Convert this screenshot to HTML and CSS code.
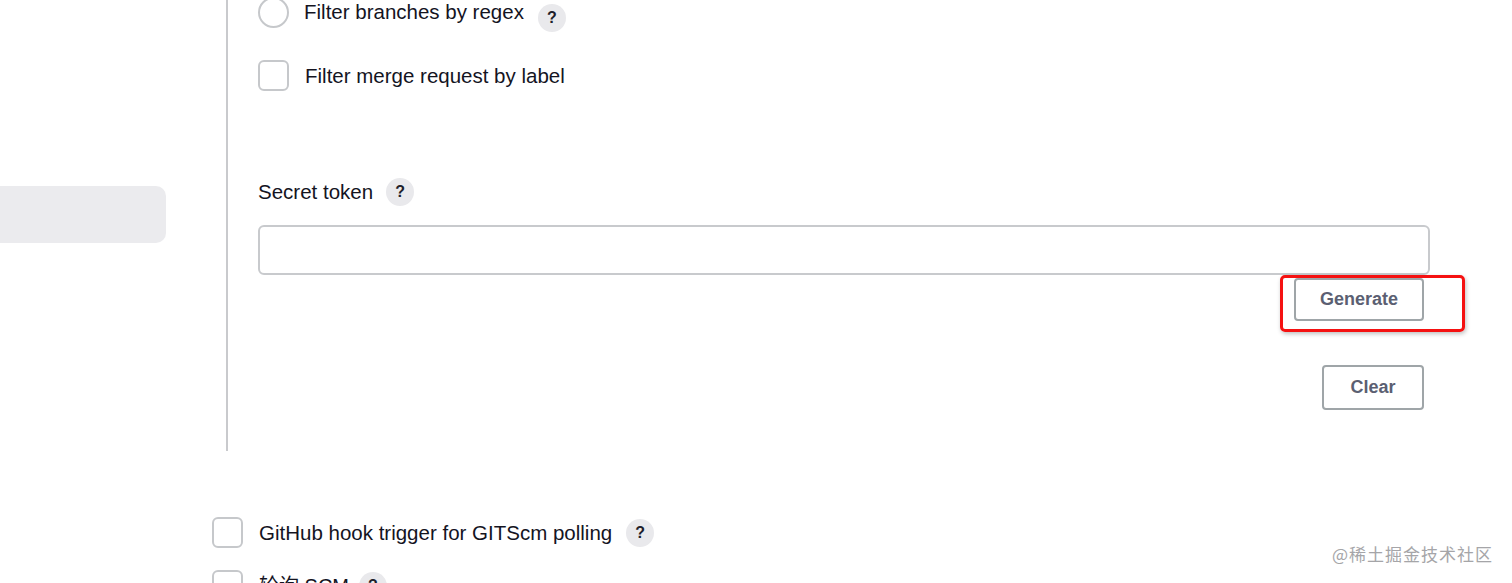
FILE: index.html
```html
<!DOCTYPE html>
<html lang="zh">
<head>
<meta charset="utf-8">
<title>Build Triggers</title>
<link rel="stylesheet" href="styles.css">
</head>
<body>
<div class="page">
  <aside class="sidebar">
    <div class="side-item"></div>
  </aside>
  <main class="main">
    <section class="nested">
      <div class="opt opt-first">
        <span class="radio"></span>
        <span class="label">Filter branches by regex</span>
        <span class="help help-low">?</span>
      </div>
      <div class="opt opt-second">
        <span class="checkbox"></span>
        <span class="label">Filter merge request by label</span>
      </div>
      <div class="field-title">
        <span class="label">Secret token</span>
        <span class="help">?</span>
      </div>
      <input class="text-input" type="text">
      <div class="btn-row">
        <div class="annot">
          <button class="btn btn-generate">Generate</button>
          <span class="red-box"></span>
        </div>
      </div>
      <div class="btn-row btn-row-clear">
        <button class="btn btn-clear">Clear</button>
      </div>
    </section>
    <div class="opt opt-outer">
      <span class="checkbox"></span>
      <span class="label">GitHub hook trigger for GITScm polling</span>
      <span class="help">?</span>
    </div>
    <div class="opt opt-outer2">
      <span class="checkbox"></span>
      <span class="label label-cjk">轮询 SCM</span>
      <span class="help help-tight">?</span>
    </div>
  </main>
</div>
<div class="watermark">@稀土掘金技术社区</div>
</body>
</html>
```
FILE: styles.css
```css
html, body {
  margin: 0;
  padding: 0;
  background: #ffffff;
  overflow: hidden;
  height: 583px;
}
body {
  font-family: "Liberation Sans", "Noto Sans CJK SC", Arial, sans-serif;
  color: #14141f;
}
.page {
  display: grid;
  grid-template-columns: 212px 1fr;
}
.sidebar {
  padding-top: 186px;
}
.side-item {
  width: 166px;
  height: 57px;
  background: #ebebee;
  border-radius: 0 10px 10px 0;
}
.main {
  padding-right: 82px;
}
.nested {
  margin-left: 14px;
  margin-top: -3px;
  border-left: 2px solid #c9cacd;
  padding-left: 30px;
  padding-bottom: 41px;
  display: flex;
  flex-direction: column;
}
.opt {
  display: flex;
  align-items: center;
  height: 31px;
}
.label {
  font-size: 20.5px;
  line-height: 28px;
  white-space: nowrap;
}
.label-cjk {
  font-size: 20px;
}
.radio {
  width: 27px;
  height: 27px;
  border: 2px solid #c6c8cb;
  border-radius: 50%;
  margin-right: 15px;
  flex: none;
}
.checkbox {
  width: 27px;
  height: 27px;
  border: 2px solid #c6c8cb;
  border-radius: 6px;
  margin-right: 16px;
  flex: none;
}
.opt-first .label {
  margin-top: -2px;
}
.help {
  width: 28px;
  height: 28px;
  border-radius: 50%;
  background: #e9e9ec;
  color: #20202a;
  font-size: 16px;
  font-weight: bold;
  display: inline-flex;
  align-items: center;
  justify-content: center;
  margin-left: 14px;
  flex: none;
}
.help-low {
  margin-top: 10px;
}
.help-tight {
  margin-left: 10px;
}
.opt-second {
  margin-top: 32px;
}
.field-title {
  display: flex;
  align-items: center;
  margin-top: 87px;
  height: 28px;
}
.field-title .help {
  margin-left: 13px;
}
.text-input {
  margin-top: 19px;
  height: 50px;
  box-sizing: border-box;
  border: 2px solid #c8cacd;
  border-radius: 6px;
  background: #fff;
  outline: none;
}
.btn-row {
  display: flex;
  justify-content: flex-end;
  padding-right: 6px;
  margin-top: 3px;
}
.btn-row-clear {
  margin-top: 44px;
}
.annot {
  position: relative;
  display: flex;
}
.btn {
  font-family: "Liberation Sans", Arial, sans-serif;
  font-weight: bold;
  font-size: 18px;
  color: #5b5f72;
  background: #fff;
  border: 2px solid #9fa5a8;
  border-radius: 4px;
  box-sizing: border-box;
  padding: 0;
}
.btn-generate {
  width: 130px;
  height: 43px;
}
.btn-clear {
  width: 102px;
  height: 45px;
}
.red-box {
  position: absolute;
  left: -14px;
  right: -41px;
  top: -3px;
  bottom: -11px;
  border: 3px solid #f51111;
  border-radius: 5px;
  box-shadow: 1px 2px 4px rgba(0, 0, 0, 0.25);
  pointer-events: none;
}
.opt-outer {
  margin-top: 66px;
}
.opt-outer2 {
  margin-top: 22px;
}
.watermark {
  position: absolute;
  right: 19px;
  top: 541px;
  font-family: "Noto Sans CJK SC", sans-serif;
  font-size: 17px;
  color: #a5a5a8;
  letter-spacing: 1px;
}
```
